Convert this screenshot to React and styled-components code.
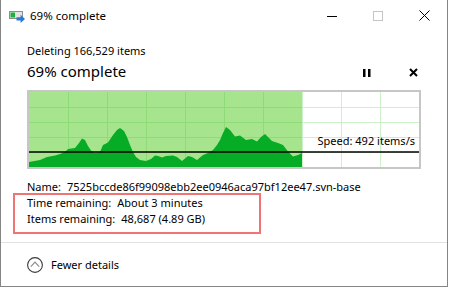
import React from 'react'
import styled, { createGlobalStyle } from 'styled-components'

const GlobalStyle = createGlobalStyle`
  * { box-sizing: border-box; }
  html, body { margin: 0; background: #fff; }
  body {
    font-family: "Noto Sans", "Open Sans", sans-serif;
    color: #000;
  }
`

// speed samples as page coordinates of the graph (viewBox uses the same ones)
const samples = [
  [29, 162], [40, 160], [47, 157], [55, 155.5], [60, 154], [65, 152], [68, 149], [75, 148],
  [79, 143], [82, 138.5], [85, 140], [88, 146], [91, 150.5], [95, 153], [100, 152], [103, 145],
  [108, 142.5], [113, 135], [117, 130], [120, 128], [124, 131], [127, 137], [130, 145],
  [133, 152], [136, 157], [140, 160], [146, 161], [151, 159], [155, 155.5], [158, 156],
  [162, 157.5], [166, 156], [173, 155.5], [177, 157], [182, 161], [188, 156], [192, 157],
  [197, 160], [203, 155], [208, 153], [213, 150], [217, 145], [220, 140], [223, 133],
  [226, 127], [230, 130], [235, 136.5], [240, 135.5], [246, 140], [252, 139], [257, 141.5],
  [261, 137], [265, 134], [268, 137], [272, 141], [278, 143], [283, 145], [288, 151.5],
  [293, 156.5], [298, 155], [302, 153],
]

const G = { x: 29, y: 92, w: 390, h: 75, done: 302, speedY: 152 }

function App() {
  const area =
    `M${G.x},${G.y + G.h} ` +
    samples.map(([x, y]) => `L${x},${y}`).join(' ') +
    ` L${G.done},${G.y + G.h} Z`

  const cols = Array.from({ length: 9 }, (_, i) => G.x + 39 * (i + 1) + 0.5)
  const rows = Array.from({ length: 4 }, (_, i) => G.y + 15 * (i + 1) + 0.5)

  return (
    <>
      <GlobalStyle />
      <Window>
        <TitleBar>
          <AppIcon width="16" height="12" viewBox="0 0 16 12">
            <rect x="0.5" y="0.5" width="13" height="7" fill="#e4e4e4" stroke="#8f8f8f" />
            <rect x="1.5" y="1.5" width="4.5" height="5" fill="#1db140" />
            <path d="M7.5 6.3 H11.6 V3.8 L16 7.9 L11.6 12 V9.5 H7.5 Z" fill="#2b7bd4" />
          </AppIcon>
          <TitleText>69% complete</TitleText>
          <CaptionButton>
            <svg width="10" height="10" viewBox="0 0 10 10">
              <path d="M0 5.5 H10" stroke="#000" strokeWidth="1" />
            </svg>
          </CaptionButton>
          <CaptionButton>
            <svg width="10" height="10" viewBox="0 0 10 10">
              <rect x="0.5" y="0.5" width="9" height="9" fill="none" stroke="#c4c4c4" />
            </svg>
          </CaptionButton>
          <CaptionButton>
            <svg width="11" height="11" viewBox="0 0 11 11">
              <path d="M0.5 0.5 L10.5 10.5 M10.5 0.5 L0.5 10.5" stroke="#000" strokeWidth="1" />
            </svg>
          </CaptionButton>
        </TitleBar>

        <Content>
          <Subtitle>Deleting 166,529 items</Subtitle>
          <ProgressRow>
            <Heading>69% complete</Heading>
            <Controls>
              <ControlButton>
                <svg width="8" height="8" viewBox="0 0 8 8">
                  <rect x="0" y="0" width="2.5" height="8" fill="#000" />
                  <rect x="5" y="0" width="2.5" height="8" fill="#000" />
                </svg>
              </ControlButton>
              <ControlButton>
                <svg width="9" height="9" viewBox="0 0 9 9">
                  <path d="M1 1 L8 8 M8 1 L1 8" stroke="#000" strokeWidth="2" />
                </svg>
              </ControlButton>
            </Controls>
          </ProgressRow>

          <Graph>
            <svg width={G.w} height={G.h} viewBox={`${G.x} ${G.y} ${G.w} ${G.h}`}>
              <rect x={G.x} y={G.y} width={G.w} height={G.h} fill="#fff" />
              {cols.map((x) => (
                <line key={'c' + x} x1={x} y1={G.y} x2={x} y2={G.y + G.h} stroke="#cdf0cb" />
              ))}
              {rows.map((y) => (
                <line key={'r' + y} x1={G.x} y1={y} x2={G.x + G.w} y2={y} stroke="#cdf0cb" />
              ))}
              <rect x={G.x} y={G.y} width={G.done - G.x} height={G.h} fill="#a6e58d" />
              {cols.filter((x) => x < G.done).map((x) => (
                <line key={'gc' + x} x1={x} y1={G.y} x2={x} y2={G.y + G.h} stroke="#8edb78" />
              ))}
              {rows.map((y) => (
                <line key={'gr' + y} x1={G.x} y1={y} x2={G.done} y2={y} stroke="#8edb78" />
              ))}
              <path d={area} fill="#06ab26" />
              <line x1={G.x} y1={G.speedY} x2={G.x + G.w} y2={G.speedY} stroke="#000" strokeWidth="1.3" />
            </svg>
            <Speed>Speed: 492 items/s</Speed>
          </Graph>

          <Details>
            <Line>
              <Label>Name:</Label>
              7525bccde86f99098ebb2ee0946aca97bf12ee47.svn-base
            </Line>
            <Marked>
              <Line>
                <Label>Time remaining:</Label>
                About 3 minutes
              </Line>
              <Line>
                <Label>Items remaining:</Label>
                48,687 (4.89 GB)
              </Line>
            </Marked>
          </Details>
        </Content>

        <Footer>
          <svg width="16" height="16" viewBox="0 0 16 16">
            <circle cx="8" cy="8" r="7.4" fill="none" stroke="#3a3a3a" strokeWidth="1.1" />
            <path d="M3.8 9.6 L8 5.2 L12.2 9.6" fill="none" stroke="#8c8c8c" strokeWidth="1.2" />
          </svg>
          <FooterText>Fewer details</FooterText>
        </Footer>
      </Window>
    </>
  )
}

export default App

const Window = styled.div`
  width: 448px;
  height: 287px;
  display: flex;
  flex-direction: column;
  background: #fff;
  border-left: 1px solid #858585;
  border-right: 1px solid #858585;
  border-bottom: 1px solid #858585;
`
const TitleBar = styled.div`
  height: 31px;
  display: flex;
  align-items: center;
  padding-left: 8px;
`
const AppIcon = styled.svg`
  margin-top: 2px;
  flex-shrink: 0;
`
const TitleText = styled.div`
  flex: 1;
  margin-left: 5px;
  font-size: 11.5px;
`
const CaptionButton = styled.div`
  width: 46px;
  align-self: stretch;
  display: flex;
  align-items: center;
  justify-content: center;
`
const Content = styled.div`
  padding: 12px 26px 0;
`
const Subtitle = styled.div`
  font-size: 11px;
  line-height: 15px;
`
const ProgressRow = styled.div`
  margin-top: 3px;
  height: 20px;
  display: flex;
  align-items: center;
  justify-content: space-between;
`
const Heading = styled.div`
  font-size: 15px;
  line-height: 20px;
`
const Controls = styled.div`
  display: flex;
  gap: 30px;
`
const ControlButton = styled.div`
  width: 16px;
  height: 16px;
  margin-top: 3px;
  display: flex;
  align-items: center;
  justify-content: center;
`
const Graph = styled.div`
  position: relative;
  margin-top: 9px;
  width: 394px;
  height: 79px;
  border: 2px solid #c6c6c6;

  svg { display: block; }
`
const Speed = styled.div`
  position: absolute;
  right: 4px;
  top: 41px;
  font-size: 11px;
  line-height: 15px;
  white-space: nowrap;
`
const Details = styled.div`
  margin-top: 10px;
  font-size: 11px;
  line-height: 16px;
`
const Line = styled.div`
  white-space: nowrap;
`
const Label = styled.span`
  margin-right: 6px;
`
const Marked = styled.div`
  position: relative;

  &::after {
    content: '';
    position: absolute;
    left: -14px;
    top: -2px;
    width: 244px;
    height: 37px;
    border: 2px solid #f07474;
    pointer-events: none;
  }
`
const Footer = styled.div`
  flex: 1;
  margin-top: 15px;
  border-top: 1px solid #e2e2e2;
  display: flex;
  align-items: center;
  gap: 8px;
  padding-left: 26px;
`
const FooterText = styled.div`
  font-size: 11px;
  line-height: 15px;
`
